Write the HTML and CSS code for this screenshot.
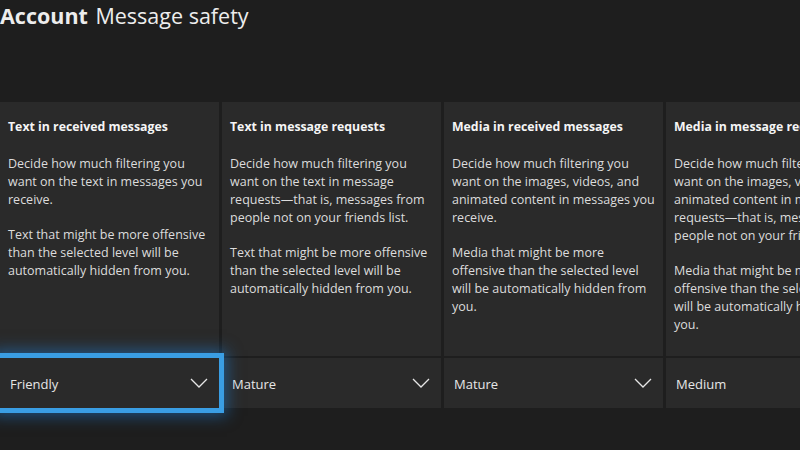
FILE: index.html
```html
<!DOCTYPE html>
<html lang="en">
<head>
  <meta charset="UTF-8" />
  <title>Message safety</title>
  <link rel="stylesheet" href="styles.css">
</head>
<body>
  <header class="title">
    <span class="crumb">Account</span>
    <span class="page">Message safety</span>
  </header>

  <div class="cards">
    <div class="card">
      <div class="info">
        <h2>Text in received messages</h2>
        <p>Decide how much filtering you want on the text in messages you receive.</p>
        <p>Text that might be more offensive than the selected level will be automatically hidden from you.</p>
      </div>
      <div class="select focused">
        <span>Friendly</span>
        <svg class="chev" width="18" height="10" viewBox="0 0 18 10"><path d="M1 1 L9 9 L17 1" fill="none" stroke="#e6e6e6" stroke-width="1.3"/></svg>
      </div>
    </div>

    <div class="card">
      <div class="info">
        <h2>Text in message requests</h2>
        <p>Decide how much filtering you want on the text in message requests—that is, messages from people not on your friends list.</p>
        <p>Text that might be more offensive than the selected level will be automatically hidden from you.</p>
      </div>
      <div class="select">
        <span>Mature</span>
        <svg class="chev" width="18" height="10" viewBox="0 0 18 10"><path d="M1 1 L9 9 L17 1" fill="none" stroke="#e6e6e6" stroke-width="1.3"/></svg>
      </div>
    </div>

    <div class="card">
      <div class="info">
        <h2>Media in received messages</h2>
        <p>Decide how much filtering you want on the images, videos, and animated content in messages you receive.</p>
        <p>Media that might be more offensive than the selected level will be automatically hidden from you.</p>
      </div>
      <div class="select">
        <span>Mature</span>
        <svg class="chev" width="18" height="10" viewBox="0 0 18 10"><path d="M1 1 L9 9 L17 1" fill="none" stroke="#e6e6e6" stroke-width="1.3"/></svg>
      </div>
    </div>

    <div class="card">
      <div class="info">
        <h2>Media in message requests</h2>
        <p>Decide how much filtering you want on the images, videos, and animated content in message requests—that is, messages from people not on your friends list.</p>
        <p>Media that might be more offensive than the selected level will be automatically hidden from you.</p>
      </div>
      <div class="select">
        <span>Medium</span>
        <svg class="chev" width="18" height="10" viewBox="0 0 18 10"><path d="M1 1 L9 9 L17 1" fill="none" stroke="#e6e6e6" stroke-width="1.3"/></svg>
      </div>
    </div>
  </div>
</body>
</html>
```

FILE: styles.css
```css
body {
  margin: 0;
  width: 800px;
  height: 450px;
  overflow: hidden;
  background: #1e1e1e;
  color: #e0e0e0;
  font-family: 'Open Sans', 'Noto Sans', sans-serif;
}

.title {
  height: 102px;
  font-size: 21.5px;
  line-height: 32px;
  color: #ededed;
}

.crumb {
  font-weight: 700;
  margin-right: 2px;
}

.cards {
  display: flex;
  gap: 3px;
  width: 900px;
}

.card {
  flex: 0 0 219px;
  display: flex;
  flex-direction: column;
  height: 306px;
}

.info {
  background: #2a2a2a;
  padding: 16px 8px 0 8px;
  height: 239px;
  margin-bottom: 2px;
}

.info h2 {
  margin: 0 0 19px 0;
  font-size: 12.3px;
  line-height: 18px;
  font-weight: 700;
  color: #f5f5f5;
}

.info p {
  margin: 0 0 17px 0;
  font-size: 12.5px;
  line-height: 18px;
  color: #dcdcdc;
}

.select {
  background: #2a2a2a;
  height: 50px;
  display: flex;
  align-items: center;
  justify-content: space-between;
  padding: 0 11px 0 10px;
  font-size: 13px;
  color: #e6e6e6;
}

.select span {
  padding-top: 1px;
}

.select.focused {
  position: relative;
  z-index: 1;
  outline: 5px solid #3a9ee4;
  outline-offset: 0;
  box-shadow: 0 0 14px 8px rgba(30, 130, 220, 0.5);
}
```
